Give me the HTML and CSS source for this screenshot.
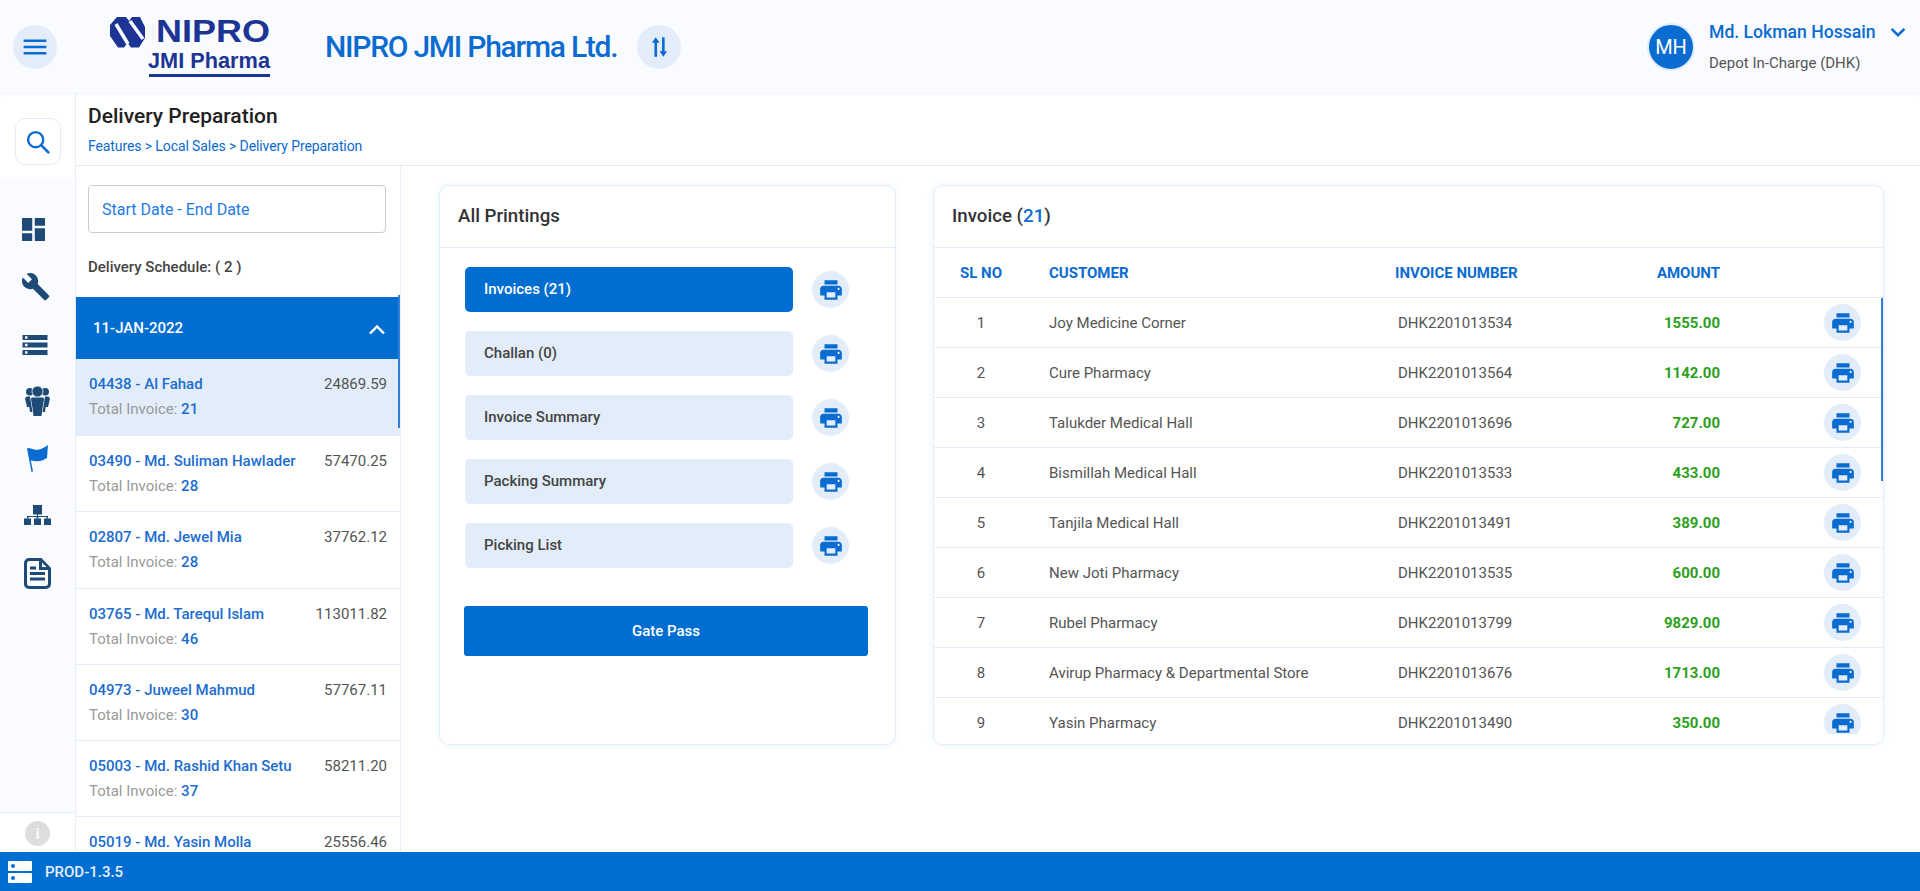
FILE: index.html
```html
<!DOCTYPE html>
<html lang="en">
<head>
<meta charset="utf-8">
<title>Delivery Preparation</title>
<link rel="stylesheet" href="styles.css">
</head>
<body>
<svg class="defs" width="0" height="0" aria-hidden="true">
  <symbol id="print" viewBox="0 0 24 24"><path d="M19 8H5c-1.66 0-3 1.34-3 3v6h4v4h12v-4h4v-6c0-1.66-1.34-3-3-3zm-3 11H8v-5h8v5zm3-7c-.55 0-1-.45-1-1s.45-1 1-1 1 .45 1 1-.45 1-1 1zm-1-9H6v4h12V3z"/></symbol>
</svg>
<div class="app">
  <header class="topbar">
    <button class="round-btn menu-btn" aria-label="Menu">
      <svg viewBox="0 0 24 24" class="ic-26"><path d="M1.500 5h21v2.400h-21zM1.500 10.800h21v2.400h-21zM1.500 16.600h21v2.400h-21z"/></svg>
    </button>
    <div class="logo">
      <svg class="logo-svg" viewBox="0 0 164 62" width="164" height="62">
        <path class="logo-mark" d="M8 1H17L20 5L23 1H31L36 11V22L30 31.500H22L18.500 27L15 31.500H9L1 20V9Z"/>
        <path class="logo-cut" d="M7 8L19 28M21 5L34 23"/>
        <text class="logo-nipro" transform="translate(47 26) scale(1.125 1)">NIPRO</text>
        <text class="logo-jmi" transform="translate(39 52) scale(.988 1)">JMI Pharma</text>
        <rect class="logo-line" x="40" y="58" width="121" height="3"/>
      </svg>
    </div>
    <div class="company">NIPRO JMI Pharma Ltd.</div>
    <button class="round-btn swap-btn" aria-label="Switch company">
      <svg viewBox="0 0 24 24" class="ic-26"><path d="M9 3L12.500 8H10.200V21H7.800V8H5.500zM14.800 3H17.200V16H19.500L16 21L12.500 16H14.800z"/></svg>
    </button>
    <div class="user">
      <div class="avatar">MH</div>
      <div class="user-info">
        <div class="user-name">Md. Lokman Hossain
          <svg viewBox="0 0 24 24" class="user-chev"><path d="M5 8.500l7 7 7-7" fill="none" stroke-width="2.600"/></svg>
        </div>
        <div class="user-role">Depot In-Charge (DHK)</div>
      </div>
    </div>
  </header>

  <div class="body">
    <aside class="rail">
      <div class="rail-top">
        <button class="search-btn" aria-label="Search">
          <svg viewBox="0 0 24 24" width="28" height="28"><circle cx="10" cy="10" r="6.500" fill="none" stroke-width="2"/><path d="M15 15l6.500 6.500" fill="none" stroke-width="2.200"/></svg>
        </button>
      </div>
      <nav class="rail-nav">
        <svg class="nav-ic nav-dash" viewBox="3 3 18 18"><path d="M3 13h8V3H3v10zm0 8h8v-6H3v6zm10 0h8V11h-8v10zm0-18v6h8V3h-8z"/></svg>
        <svg class="nav-ic nav-wrench" viewBox="1 1 22.500 22.500"><path d="M22.700 19l-9.100-9.100c.9-2.300.4-5-1.500-6.900-2-2-5-2.400-7.400-1.300L9 6 6 9 1.600 4.700C.4 7.100.9 10.100 2.900 12.100c1.900 1.900 4.600 2.400 6.900 1.500l9.100 9.100c.4.400 1 .4 1.400 0l2.300-2.300c.5-.4.500-1.100.1-1.400z"/></svg>
        <svg class="nav-ic nav-store" viewBox="2 4 20 16"><path d="M2 20h20v-4H2v4zm2-3h2v2H4v-2zM2 4v4h20V4H2zm4 3H4V5h2v2zm-4 7h20v-4H2v4zm2-3h2v2H4v-2z"/></svg>
        <svg class="nav-ic nav-group" viewBox="0 0 25 30">
          <circle cx="4.800" cy="5.800" r="3.800"/><circle cx="20.200" cy="5.800" r="3.800"/>
          <path d="M1.500 10.500H5L7 23l.4 3H5L4.300 21H2L0 12.500z"/>
          <path d="M23.500 10.500H20L18 23l-.4 3H20l.7-5H23L25 12.500z"/>
          <circle class="group-head" cx="12.500" cy="5.500" r="5.500"/>
          <path d="M7.500 11.500h10a1.500 1.500 0 0 1 1.500 1.700L17.500 22l-1 8h-8l-1-8L6 13.200a1.500 1.500 0 0 1 1.500-1.700z"/>
        </svg>
        <svg class="nav-ic nav-flag" viewBox="0 0 21 27"><path d="M0 3.500l2-.5 5 1.500c5 1 9-1 14-4.500l-1 13c-4 2.500-8 4-12.500 3L3.800 15.500 6 26.500 4.500 27z"/></svg>
        <svg class="nav-ic nav-map" viewBox="0 0 27 20"><path d="M9 0h9v9.500h-4V11h10v2.500h-1.500V12h-8v1.500h-2V12h-8v1.500H3V11h10V9.500H9z"/><path d="M0 13.500h7V20H0zM10 13.500h7V20h-7zM20 13.500h7V20h-7z"/></svg>
        <svg class="nav-ic nav-doc" viewBox="0 0 27 31"><path fill-rule="evenodd" d="M5 0h12.500L27 10v16a5 5 0 0 1-5 5H5a5 5 0 0 1-5-5V5a5 5 0 0 1 5-5zm.5 3A2.500 2.500 0 0 0 3 5.500v20A2.500 2.500 0 0 0 5.500 28h16a2.500 2.500 0 0 0 2.500-2.500V12h-9V3zM18 4.500V9h4.500zM6 14h15v3H6zM6 19.500h15v3H6zM6 8.500h6v3H6z"/></svg>
      </nav>
      <div class="rail-bottom"><span class="info-dot">i</span></div>
    </aside>

    <main class="content">
      <div class="page-head">
        <h1 class="page-title">Delivery Preparation</h1>
        <div class="crumbs">Features &gt; Local Sales &gt; Delivery Preparation</div>
      </div>
      <div class="workspace">
        <section class="schedule">
          <div class="date-box">Start Date - End Date</div>
          <div class="sched-count">Delivery Schedule: ( 2 )</div>
          <div class="accordion">
            <span>11-JAN-2022</span>
            <svg viewBox="0 0 24 24" width="24" height="24"><path d="M5 15.500l7-7 7 7" fill="none" stroke-width="2.400"/></svg>
          </div>
          <div class="sched-list">
            <div class="sched-row active"><div class="sched-line"><span class="sched-name">04438 - Al Fahad</span><span class="sched-amt">24869.59</span></div><div class="sched-total">Total Invoice: <b>21</b></div></div>
            <div class="sched-row"><div class="sched-line"><span class="sched-name">03490 - Md. Suliman Hawlader</span><span class="sched-amt">57470.25</span></div><div class="sched-total">Total Invoice: <b>28</b></div></div>
            <div class="sched-row"><div class="sched-line"><span class="sched-name">02807 - Md. Jewel Mia</span><span class="sched-amt">37762.12</span></div><div class="sched-total">Total Invoice: <b>28</b></div></div>
            <div class="sched-row"><div class="sched-line"><span class="sched-name">03765 - Md. Tarequl Islam</span><span class="sched-amt">113011.82</span></div><div class="sched-total">Total Invoice: <b>46</b></div></div>
            <div class="sched-row"><div class="sched-line"><span class="sched-name">04973 - Juweel Mahmud</span><span class="sched-amt">57767.11</span></div><div class="sched-total">Total Invoice: <b>30</b></div></div>
            <div class="sched-row"><div class="sched-line"><span class="sched-name">05003 - Md. Rashid Khan Setu</span><span class="sched-amt">58211.20</span></div><div class="sched-total">Total Invoice: <b>37</b></div></div>
            <div class="sched-row"><div class="sched-line"><span class="sched-name">05019 - Md. Yasin Molla</span><span class="sched-amt">25556.46</span></div></div>
          </div>
          <span class="thumb thumb-left"></span>
        </section>

        <section class="card printings">
          <div class="card-head">All Printings</div>
          <div class="print-body">
            <div class="print-row"><div class="print-label on">Invoices (21)</div><span class="print-btn"><svg><use href="#print"/></svg></span></div>
            <div class="print-row"><div class="print-label">Challan (0)</div><span class="print-btn"><svg><use href="#print"/></svg></span></div>
            <div class="print-row"><div class="print-label">Invoice Summary</div><span class="print-btn"><svg><use href="#print"/></svg></span></div>
            <div class="print-row"><div class="print-label">Packing Summary</div><span class="print-btn"><svg><use href="#print"/></svg></span></div>
            <div class="print-row"><div class="print-label">Picking List</div><span class="print-btn"><svg><use href="#print"/></svg></span></div>
            <div class="gate-pass">Gate Pass</div>
          </div>
        </section>

        <section class="card invoices">
          <div class="card-head">Invoice (<span class="count">21</span>)</div>
          <div class="inv-row inv-head"><span>SL NO</span><span>CUSTOMER</span><span>INVOICE NUMBER</span><span>AMOUNT</span><span></span></div>
          <div class="inv-body">
            <div class="inv-row"><span>1</span><span>Joy Medicine Corner</span><span>DHK2201013534</span><span>1555.00</span><span class="print-btn"><svg><use href="#print"/></svg></span></div>
            <div class="inv-row"><span>2</span><span>Cure Pharmacy</span><span>DHK2201013564</span><span>1142.00</span><span class="print-btn"><svg><use href="#print"/></svg></span></div>
            <div class="inv-row"><span>3</span><span>Talukder Medical Hall</span><span>DHK2201013696</span><span>727.00</span><span class="print-btn"><svg><use href="#print"/></svg></span></div>
            <div class="inv-row"><span>4</span><span>Bismillah Medical Hall</span><span>DHK2201013533</span><span>433.00</span><span class="print-btn"><svg><use href="#print"/></svg></span></div>
            <div class="inv-row"><span>5</span><span>Tanjila Medical Hall</span><span>DHK2201013491</span><span>389.00</span><span class="print-btn"><svg><use href="#print"/></svg></span></div>
            <div class="inv-row"><span>6</span><span>New Joti Pharmacy</span><span>DHK2201013535</span><span>600.00</span><span class="print-btn"><svg><use href="#print"/></svg></span></div>
            <div class="inv-row"><span>7</span><span>Rubel Pharmacy</span><span>DHK2201013799</span><span>9829.00</span><span class="print-btn"><svg><use href="#print"/></svg></span></div>
            <div class="inv-row"><span>8</span><span>Avirup Pharmacy &amp; Departmental Store</span><span>DHK2201013676</span><span>1713.00</span><span class="print-btn"><svg><use href="#print"/></svg></span></div>
            <div class="inv-row"><span>9</span><span>Yasin Pharmacy</span><span>DHK2201013490</span><span>350.00</span><span class="print-btn"><svg><use href="#print"/></svg></span></div>
          </div>
          <span class="thumb thumb-right"></span>
        </section>
      </div>
    </main>
  </div>

  <footer class="footer">
    <svg viewBox="0 0 24 22" width="24" height="22"><path fill-rule="evenodd" d="M1 0h22a1 1 0 0 1 1 1v8a1 1 0 0 1-1 1H1a1 1 0 0 1-1-1V1a1 1 0 0 1 1-1zm4 3a2 2 0 1 0 0 4 2 2 0 0 0 0-4zM1 12h22a1 1 0 0 1 1 1v8a1 1 0 0 1-1 1H1a1 1 0 0 1-1-1v-8a1 1 0 0 1 1-1zm4 3a2 2 0 1 0 0 4 2 2 0 0 0 0-4z"/></svg>
    <span>PROD-1.3.5</span>
  </footer>
</div>
</body>
</html>
```

FILE: styles.css
```css
* { box-sizing: border-box; }
html, body { margin: 0; height: 100%; overflow: hidden; }
body { font-family: Roboto, "Liberation Sans", sans-serif; font-size: 15px; color: #444; background: #fff; }
.defs { position: absolute; }
.app { display: flex; flex-direction: column; height: 891px; }

/* top bar */
.topbar { flex: 0 0 93px; display: flex; align-items: center; background: #f9fbff; padding: 0 0 0 13px; box-shadow: 0 1px 3px rgba(120,160,220,.12); position: relative; z-index: 2; }
.round-btn { width: 44px; height: 44px; border: 0; padding: 0; border-radius: 50%; background: #e2edf9; display: flex; align-items: center; justify-content: center; }
.ic-26 { width: 26px; height: 26px; fill: #0a6bd0; }
.logo { margin-left: 52px; height: 62px; display: flex; }
.logo-svg { overflow: visible; }
.logo-mark { fill: #1c3494; }
.logo-cut { fill: none; stroke: #f9fbff; stroke-width: 3.5; }
.logo-nipro { font-family: "Liberation Sans", sans-serif; font-weight: 700; font-size: 32px; fill: #1c3494; }
.logo-jmi { font-family: "Liberation Sans", sans-serif; font-weight: 700; font-size: 22px; fill: #1c3494; }
.logo-line { fill: #1c3494; }
.company { margin-left: 52px; font-size: 30px; font-weight: 500; color: #0a6bd0; letter-spacing: -1.25px; white-space: nowrap; }
.swap-btn { margin-left: 20px; }
.user { margin-left: auto; display: flex; align-items: center; padding-right: 11px; }
.avatar { width: 48px; height: 48px; border-radius: 50%; background: #0a6bd0; border: 2px solid #e2edf9; color: #fff; font-size: 20px; display: flex; align-items: center; justify-content: center; }
.user-info { margin-left: 14px; width: 200px; }
.user-name { font-size: 17.6px; font-weight: 500; color: #0a6bd0; display: flex; align-items: center; justify-content: space-between; line-height: 24px; margin-top: -2px; }
.user-chev { width: 22px; height: 22px; stroke: #0a6bd0; }
.user-role { margin-top: 10px; color: #555; font-size: 15px; line-height: 18px; }

.body { flex: 1; display: flex; min-height: 0; }

/* rail */
.rail { flex: 0 0 75px; display: flex; flex-direction: column; background: #f9fbff; }
.rail-top { height: 86px; background: #fff; display: flex; align-items: flex-start; justify-content: center; padding-top: 25px; }
.search-btn { width: 46px; height: 47px; background: #fff; border: 1px solid #e2edf9; border-radius: 10px; padding: 0; display: flex; align-items: center; justify-content: center; }
.search-btn svg { stroke: #0a6bd0; }
.rail-nav { flex: 1; display: flex; flex-direction: column; }
.nav-ic { display: block; fill: #1d4b75; }
.nav-dash { width: 23px; height: 23px; margin: 39px 0 0 22px; }
.nav-wrench { width: 28px; height: 28px; margin: 32px 0 0 22px; }
.nav-store { width: 26px; height: 20px; margin: 34px 0 0 22px; }
.nav-group { width: 25px; height: 30px; margin: 31px 0 0 25px; }
.group-head { stroke: #f9fbff; stroke-width: .8; }
.nav-flag { width: 21px; height: 27px; margin: 29px 0 0 27px; fill: #0a6bd0; }
.nav-map { width: 27px; height: 20px; margin: 33px 0 0 24px; }
.nav-doc { width: 27px; height: 31px; margin: 33px 0 0 24px; }
.rail-bottom { height: 40px; background: #fff; border-top: 1px solid #e6eefa; display: flex; justify-content: center; padding-top: 8px; }
.info-dot { width: 25px; height: 25px; border-radius: 50%; background: #ddd; color: #fff; font-weight: 700; font-size: 14px; display: flex; align-items: center; justify-content: center; }

/* main */
.content { flex: 1; min-width: 0; display: flex; flex-direction: column; border-left: 1px solid #e6eefa; }
.page-head { height: 73px; border-bottom: 1px solid #e2ecf9; padding: 11px 0 0 12px; }
.page-title { margin: 0; font-size: 21px; font-weight: 500; line-height: 24px; color: #222; }
.crumbs { margin-top: 9px; font-size: 14px; letter-spacing: -.1px; line-height: 18px; color: #0a6bd0; }
.workspace { flex: 1; min-height: 0; display: flex; align-items: flex-start; }

/* schedule */
.schedule { flex: 0 0 325px; position: relative; height: 686px; overflow: hidden; border-right: 1px solid #e6eefa; }
.date-box { margin: 19px 14px 0 12px; height: 48px; border: 1px solid #ccc; border-radius: 4px; padding: 0 13px; line-height: 47px; font-size: 16px; color: #1e7be6; }
.sched-count { margin: 24px 12px 0; line-height: 20px; font-weight: 500; color: #444; }
.accordion { margin-top: 20px; height: 62px; background: #006dd1; color: #fff; font-weight: 500; font-size: 15px; display: flex; align-items: center; justify-content: space-between; padding: 0 11px 0 17px; }
.accordion svg { stroke: #fff; margin-top: 4px; }
.sched-row { height: 76.25px; padding: 15px 13px 0 13px; border-bottom: 1px solid #e6eefa; }
.sched-row.active { background: #e2edf9; border-bottom: 0; height: 77px; }
.sched-line { display: flex; justify-content: space-between; line-height: 20px; }
.sched-name { color: #1c6dd0; font-weight: 500; }
.sched-amt { color: #555; }
.sched-total { margin-top: 5px; line-height: 20px; color: #999; }
.sched-total b { color: #1c6dd0; font-weight: 500; }
.thumb { position: absolute; background: #2e7fd8; width: 2px; }
.thumb-left { right: 0; top: 129px; height: 133px; }
.thumb-right { right: 0; top: 112px; height: 183px; }

/* cards */
.card { position: relative; height: 560px; margin-top: 19px; background: #fff; border: 1px solid #e3edfa; border-radius: 10px; box-shadow: 0 0 6px rgba(130,170,230,.15); overflow: hidden; }
.card-head { height: 62px; padding: 0 18px; border-bottom: 1px solid #e3edfa; font-size: 18.7px; font-weight: 500; line-height: 60px; color: #333; }
.count { color: #0a6bd0; }
.printings { flex: 0 0 457px; margin-left: 38px; }
.print-body { padding: 19px 25px 0; }
.print-row { display: flex; align-items: center; height: 45px; margin-bottom: 19px; }
.print-label { width: 328px; height: 45px; border-radius: 5px; background: #e2edf9; padding-left: 19px; line-height: 44px; font-weight: 500; color: #444; }
.print-label.on { background: #006dd1; color: #fff; }
.print-btn { flex: none; width: 37px; height: 37px; border-radius: 50%; background: #e2edf9; display: flex; align-items: center; justify-content: center; }
.print-btn svg { width: 26px; height: 26px; fill: #0a6bd0; }
.print-row .print-btn { margin-left: 19px; }
.gate-pass { margin: 38px 0 0 -1px; width: 404px; height: 50px; background: #006dd1; border-radius: 3px; color: #fff; font-weight: 500; text-align: center; line-height: 50px; }
.invoices { flex: 0 0 951px; margin-left: 37px; }

.inv-row { display: grid; grid-template-columns: 94px 367px 186px 139px 1fr; align-items: center; height: 50px; border-bottom: 1px solid #e3edfa; color: #555; }
.inv-row > :nth-child(1) { text-align: center; }
.inv-row > :nth-child(2) { padding-left: 21px; }
.inv-row > :nth-child(3) { padding-left: 3px; }
.inv-row > :nth-child(4) { text-align: right; color: #2ca01c; font-weight: 700; }
.inv-row > .print-btn { justify-self: end; margin-right: 22px; }
.inv-head { color: #0a6bd0; font-weight: 700; }
.inv-head > :nth-child(3) { padding-left: 0; }
.inv-head > :nth-child(4) { color: #0a6bd0; }
.inv-body { height: 436px; overflow: hidden; }

/* footer */
.footer { flex: 0 0 39px; background: #006dd1; display: flex; align-items: center; color: #e6f0fb; font-weight: 500; font-size: 15px; padding-left: 8px; position: relative; z-index: 3; }
.footer svg { fill: #fff; margin-right: 13px; }
```
